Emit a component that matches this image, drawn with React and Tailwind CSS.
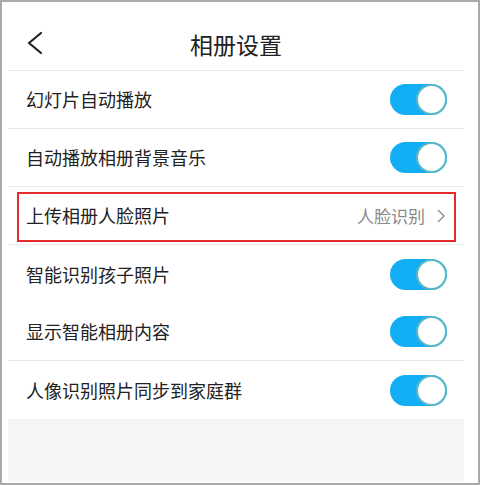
const rows = [
  { label: "幻灯片自动播放", toggle: true, line: true },
  { label: "自动播放相册背景音乐", toggle: true, line: true },
  { label: "上传相册人脸照片", value: "人脸识别", marked: true, line: true },
  { label: "智能识别孩子照片", toggle: true },
  { label: "显示智能相册内容", toggle: true, line: true },
  { label: "人像识别照片同步到家庭群", toggle: true },
];

const Toggle = () => (
  <div className="w-[57px] h-[31px] rounded-full bg-[#12aef3] flex justify-end">
    <div className="w-[31px] h-[31px] rounded-full bg-white border-2 border-[#5ab7c6]" />
  </div>
);

const App = () => {
  return (
    <div
      className="w-[480px] h-[485px] border-2 border-[#aaaaaa] bg-white pl-[6px] pr-[14px] overflow-hidden"
      style={{ fontFamily: '"Noto Sans CJK SC", "Noto Sans", sans-serif' }}
    >
      {/* 标题栏 */}
      <div className="relative h-[69px] border-b border-[#e9e9e9] flex items-center justify-center pt-[16px]">
        <svg
          className="absolute left-[18px] top-[29px]"
          width="20"
          height="24"
          viewBox="0 0 20 24"
        >
          <path
            d="M15 2 L3 12 L15 22"
            fill="none"
            stroke="#222"
            strokeWidth="2.2"
            strokeLinecap="round"
            strokeLinejoin="round"
          />
        </svg>
        <span className="text-[23px] text-[#222]">相册设置</span>
      </div>

      {/* 设置列表 */}
      {rows.map((row) => (
        <div
          key={row.label}
          className={`relative h-[58px] flex items-center justify-between pl-[18px] pr-[17px] ${
            row.line ? "border-b border-[#e9e9e9]" : ""
          }`}
        >
          <span className="text-[18px] text-[#222]">{row.label}</span>
          {row.toggle ? (
            <Toggle />
          ) : (
            <div className="flex items-center gap-[12px] pr-[2px]">
              <span className="text-[17px] text-[#8a8a8a]">{row.value}</span>
              <svg width="8" height="14" viewBox="0 0 8 14">
                <path
                  d="M1 1 L7 7 L1 13"
                  fill="none"
                  stroke="#8a8a8a"
                  strokeWidth="1.4"
                />
              </svg>
            </div>
          )}
          {row.marked && (
            <div className="absolute left-[9px] right-[8px] top-[5px] h-[50px] border-2 border-[#e52b2b] pointer-events-none" />
          )}
        </div>
      ))}

      {/* 底部空白区 */}
      <div className="h-[62px] bg-[#f5f5f5]" />
    </div>
  );
};

export default App;
